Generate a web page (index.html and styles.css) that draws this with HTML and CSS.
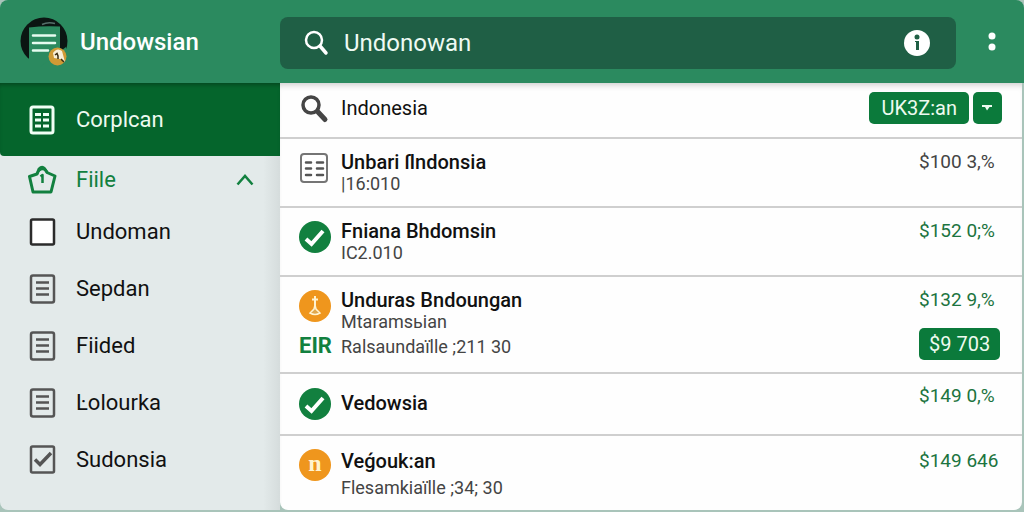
FILE: index.html
```html
<!DOCTYPE html>
<html lang="id">
<head>
    <meta charset="utf-8">
    <title>Undowsian</title>
    <link rel="stylesheet" href="styles.css">
</head>
<body>
    <!-- Top bar -->
    <header class="topbar">
        <a class="brand" href="#">
            <svg class="logo" viewBox="0 0 50 50">
                <circle cx="24" cy="24" r="23.500" fill="#0b1512"></circle>
                <path d="M9 10.500q15-2 31-1V50H9z" fill="#2b8a5f"></path>
                <path d="M20 50l26-20v20z" fill="#2b8a5f"></path>
                <path d="M22 7.500q6-3 13-1" fill="none" stroke="#56706a" stroke-width="1.500"></path>
                <path d="M13 18.500h22M13 26h22M13 33.500h15" fill="none" stroke="#e6fbf0" stroke-width="2.500" stroke-linecap="round"></path>
                <circle cx="37.500" cy="39.500" r="9" fill="#cf9a35"></circle>
                <path d="M33 36q4-6 9-2l3 11-5-3-6-1z" fill="#f8efd8"></path>
                <path d="M35 38l2-1.500 1 2.500v3M41 42l3 3" fill="none" stroke="#3a2c12" stroke-width="1.500"></path>
            </svg>
            <span>Undowsian</span>
        </a>
        <div class="search">
            <svg class="search-icon" viewBox="0 0 26 26" fill="none" stroke="currentColor" stroke-width="2.500" stroke-linecap="round">
                <circle cx="10" cy="10" r="8"></circle>
                <path d="M16 16l6 7" stroke-width="3.500"></path>
            </svg>
            <input class="search-input" type="text" value="Undonowan" aria-label="Search">
            <button class="icon-button" aria-label="Info">
                <svg class="info-icon" viewBox="0 0 26 26">
                    <circle cx="13" cy="13" r="13" fill="#fff"></circle>
                    <circle cx="13" cy="7" r="2.500" fill="#1f5f45"></circle>
                    <path d="M11 11h4v9h-3v-8h-1z" fill="#1f5f45"></path>
                </svg>
            </button>
        </div>
        <button class="icon-button menu-button" aria-label="More">
            <svg class="menu-icon" viewBox="0 0 8 20" fill="currentColor">
                <circle cx="4" cy="4" r="3.500"></circle>
                <circle cx="4" cy="15" r="3.500"></circle>
            </svg>
        </button>
    </header>

    <div class="layout">
        <!-- Sidebar -->
        <nav class="sidebar">
            <a class="nav-item active" href="#">
                <svg class="nav-icon" viewBox="0 0 30 30">
                    <rect x="4" y="2" width="22" height="26" rx="2" fill="none" stroke="#f0fff5" stroke-width="3"></rect>
                    <path d="M8 9.500h6M16 9.500h6M8 15h6M16 15h6M8 21h6M16 21h6" stroke="#f0fff5" stroke-width="3"></path>
                </svg>
                <span>Corplcan</span>
            </a>
            <button class="nav-item section">
                <svg class="nav-icon" viewBox="0 0 30 30" fill="none" stroke="currentColor" stroke-width="3" stroke-linejoin="round">
                    <path d="M2.500 11.500L10 9l2-5q3-3 5.500-.5L20 7.500l8 3.500-4 16H6z"></path>
                    <path d="M10 9q2-5 5.500-5t5 4M13.500 11.500l2-1.500v8" stroke-width="2.500"></path>
                </svg>
                <span class="grow">Fiile</span>
                <svg class="chevron" viewBox="0 0 18 12" fill="none" stroke="currentColor" stroke-width="2.500">
                    <path d="M1.500 10.500L9 2l7.500 8.500"></path>
                </svg>
            </button>
            <a class="nav-item" href="#">
                <svg class="nav-icon" viewBox="0 0 30 30">
                    <rect x="4" y="2.500" width="23" height="25" rx="1.500" fill="#fff" stroke="#2b2b2b" stroke-width="2.500"></rect>
                </svg>
                <span>Undoman</span>
            </a>
            <a class="nav-item" href="#">
                <svg class="nav-icon doc" viewBox="0 0 30 30">
                    <rect x="4" y="1.500" width="23" height="27" rx="2"></rect>
                    <path d="M9 8.500h13M9 14.500h13M9 20.500h13"></path>
                </svg>
                <span>Sepdan</span>
            </a>
            <a class="nav-item" href="#">
                <svg class="nav-icon doc" viewBox="0 0 30 30">
                    <rect x="4" y="1.500" width="23" height="27" rx="2"></rect>
                    <path d="M9 8.500h13M9 14.500h13M9 20.500h13"></path>
                </svg>
                <span>Fiided</span>
            </a>
            <a class="nav-item" href="#">
                <svg class="nav-icon doc" viewBox="0 0 30 30">
                    <rect x="4" y="1.500" width="23" height="27" rx="2"></rect>
                    <path d="M9 8.500h13M9 14.500h13M9 20.500h13"></path>
                </svg>
                <span>Ŀolourka</span>
            </a>
            <a class="nav-item" href="#">
                <svg class="nav-icon doc" viewBox="0 0 30 30">
                    <rect x="4" y="1.500" width="23" height="26" rx="1.500"></rect>
                    <path d="M8 14.500l5 5L24 8" stroke-width="3.500"></path>
                </svg>
                <span>Sudonsia</span>
            </a>
        </nav>

        <!-- Results -->
        <main class="results">
            <div class="row filter">
                <svg class="row-icon" viewBox="0 0 32 32" fill="none" stroke="#454545" stroke-linecap="round">
                    <circle cx="12" cy="12" r="8" stroke-width="3.500"></circle>
                    <path d="M19 19l7 7.500" stroke-width="5"></path>
                </svg>
                <h2 class="title">Indonesia</h2>
                <div class="actions">
                    <button class="button">UK3Z:an</button>
                    <button class="button toggle" aria-label="Open">
                        <svg class="caret" viewBox="0 0 10 6" fill="currentColor">
                            <path d="M0 0h10v2H7.500L5 5.500 3 2H0z"></path>
                        </svg>
                    </button>
                </div>
            </div>
            <div class="row">
                <svg class="row-icon" viewBox="0 0 32 32">
                    <rect x="2" y="2" width="26" height="28" rx="3" fill="#fff" stroke="#757575" stroke-width="2"></rect>
                    <path d="M7 10.500h5M18 10.500h6M7 16.500h5M18 16.500h6M7 23h5M18 23h6" stroke="#555" stroke-width="2.500" stroke-linecap="round"></path>
                </svg>
                <div class="info">
                    <h2 class="title">Unbari ſIndonsia</h2>
                    <p class="meta">|16:010</p>
                </div>
                <div class="amount plain">$100 3,%</div>
            </div>
            <div class="row">
                <svg class="row-icon" viewBox="0 0 32 32">
                    <circle cx="16" cy="16" r="16" fill="#12803f"></circle>
                    <path d="M7 18l5.500 5L24 10" fill="none" stroke="#fff" stroke-width="4"></path>
                </svg>
                <div class="info">
                    <h2 class="title">Fniana Bhdomsin</h2>
                    <p class="meta">IC2.010</p>
                </div>
                <div class="amount">$152 0;%</div>
            </div>
            <div class="row">
                <div class="icons">
                    <svg class="row-icon" viewBox="0 0 32 32">
                        <circle cx="16" cy="16" r="16" fill="#ef961d"></circle>
                        <path d="M16 6v11M13 9.500h6" stroke="#fff3d0" stroke-width="2"></path>
                        <path d="M16 15l-1 4-4 4q5 3 10 0l-4-4z" fill="#e0a84e" stroke="#fff3d0" stroke-width="1.500"></path>
                    </svg>
                    <span class="tag">EIR</span>
                </div>
                <div class="info">
                    <h2 class="title">Unduras Bndoungan</h2>
                    <p class="meta">Mtaramsьian</p>
                    <p class="meta second">Ralsaundaïlle ;211 30</p>
                </div>
                <div class="amount">
                    $132 9,%
                    <button class="button price">$9 703</button>
                </div>
            </div>
            <div class="row single">
                <svg class="row-icon" viewBox="0 0 32 32">
                    <circle cx="16" cy="16" r="16" fill="#12803f"></circle>
                    <path d="M7 18l5.500 5L24 10" fill="none" stroke="#fff" stroke-width="4"></path>
                </svg>
                <h2 class="title">Vedowsia</h2>
                <div class="amount">$149 0,%</div>
            </div>
            <div class="row">
                <span class="row-icon coin">n</span>
                <div class="info">
                    <h2 class="title">Veǵouk:an</h2>
                    <p class="meta second">Flesamkiaïlle ;34; 30</p>
                </div>
                <div class="amount">$149 646</div>
            </div>
        </main>
    </div>
</body>
</html>
```

FILE: styles.css
```css
* {
    box-sizing: border-box;
}

body {
    margin: 0;
    min-height: 100vh;
    display: flex;
    flex-direction: column;
    background: #a9c4ba;
    font-family: Roboto, "Liberation Sans", sans-serif;
    color: #111;
}

h2, p {
    margin: 0;
}

button, input {
    font-family: inherit;
    border: none;
    background: none;
    padding: 0;
}

a {
    color: inherit;
    text-decoration: none;
}

svg {
    display: block;
    flex: none;
}

/* Top bar */
.topbar {
    display: flex;
    align-items: center;
    height: 83px;
    padding: 0 28px 0 20px;
    background: #2b8a5f;
    color: #fff;
    border-radius: 8px 8px 0 0;
}

.brand {
    display: flex;
    align-items: center;
    gap: 10px;
    width: 260px;
    font-size: 24px;
    font-weight: 500;
}

.logo {
    width: 50px;
    height: 50px;
}

.search {
    display: flex;
    flex: 1;
    align-items: center;
    height: 52px;
    padding: 0 26px 0 24px;
    margin-top: 2px;
    background: #1f5f45;
    border-radius: 8px;
}

.search-icon {
    width: 26px;
    height: 26px;
}

.search-input {
    flex: 1;
    min-width: 0;
    margin-left: 14px;
    font-size: 24px;
    color: #eefaf3;
    outline: none;
}

.icon-button {
    color: #fff;
    cursor: pointer;
}

.info-icon {
    width: 26px;
    height: 26px;
}

.menu-button {
    margin-left: 32px;
}

.menu-icon {
    width: 8px;
    height: 20px;
}

/* Sidebar */
.layout {
    display: flex;
    flex: 1;
    padding: 0 2px 2px 0;
}

.sidebar {
    width: 280px;
    flex: none;
    background: linear-gradient(to right, #e3eaea 94%, #d5dcdc);
    border-radius: 0 0 0 8px;
}

.nav-item {
    display: flex;
    align-items: center;
    gap: 19px;
    width: 100%;
    height: 57px;
    padding: 0 26px 0 27px;
    font-size: 22px;
    text-align: left;
}

.nav-item.active {
    height: 73px;
    background: #05652c;
    color: #eefaf0;
    border-radius: 0 0 0 4px;
    box-shadow: inset 0 4px 4px -2px rgba(0,0,0,0.3);
}

.nav-item.section {
    height: 47px;
    color: #12803f;
    cursor: pointer;
}

.nav-icon {
    width: 30px;
    height: 30px;
}

.doc {
    fill: none;
    stroke: #555;
    stroke-width: 2.5;
}

.grow {
    flex: 1;
}

.chevron {
    width: 18px;
    height: 12px;
}

/* Results */
.results {
    flex: 1;
    background: #fefefe;
    border-radius: 0 0 8px 8px;
    box-shadow: inset 0 6px 6px -4px rgba(0,0,0,0.2);
}

.row {
    display: flex;
    align-items: flex-start;
    gap: 10px;
    padding: 11px 0 12px 19px;
    border-bottom: 2px solid #cfcfcf;
}

.row:last-child {
    padding-top: 13px;
    border-bottom: none;
}

.row.filter {
    align-items: center;
    height: 56px;
    padding: 0 20px 4px 19px;
}

.row-icon {
    width: 32px;
    height: 32px;
    margin-top: 2px;
}

.title {
    font-size: 20px;
    font-weight: 500;
    line-height: 24px;
}

.filter .title {
    font-weight: 400;
}

.info {
    flex: 1;
}

.row > .title {
    flex: 1;
}

.meta {
    font-size: 18px;
    line-height: 20px;
    color: #444;
}

.second {
    margin-top: 5px;
}

.row.single {
    height: 62px;
    padding-top: 12px;
}

.single .title {
    line-height: 34px;
}

.icons {
    width: 32px;
}

.tag {
    display: block;
    margin-top: 12px;
    font-size: 22px;
    font-weight: 700;
    line-height: 24px;
    color: #12803f;
}

.coin {
    flex: none;
    margin-top: 0;
    border-radius: 50%;
    background: #ef961d;
    color: #fff3d0;
    font-family: "Liberation Serif", serif;
    font-size: 24px;
    font-weight: 700;
    line-height: 28px;
    text-align: center;
}

.amount {
    width: 103px;
    font-size: 19px;
    line-height: 24px;
    color: #1c7440;
}

.single .amount {
    line-height: 20px;
}

.amount.plain {
    color: #444;
}

.actions {
    display: flex;
    gap: 4px;
}

.button {
    height: 32px;
    padding: 0 12px;
    border-radius: 5px;
    background: #0b7a3b;
    color: #eefaf0;
    font-size: 20px;
    line-height: 32px;
    cursor: pointer;
}

.toggle {
    width: 29px;
    padding: 0 9px;
}

.caret {
    width: 10px;
    height: 6px;
}

.price {
    display: block;
    margin-top: 16px;
    padding: 0 10px;
}
```
